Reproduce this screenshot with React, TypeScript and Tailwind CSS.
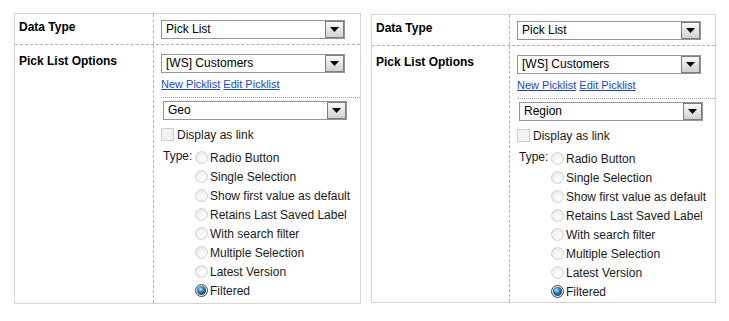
import React from "react"

const types = [
  "Radio Button",
  "Single Selection",
  "Show first value as default",
  "Retains Last Saved Label",
  "With search filter",
  "Multiple Selection",
  "Latest Version",
  "Filtered",
]

function Select({ value, className = "" }: { value: string; className?: string }) {
  return (
    <div className={`flex h-[19px] w-[184px] border border-[#959595] bg-white ${className}`}>
      <div className="flex-1 pl-[4px] text-[12px] leading-[17px] text-black">{value}</div>
      <div className="flex w-[19px] items-center justify-center border border-[#7d7d7d] bg-gradient-to-b from-[#fbfbfb] to-[#d0d0d0]">
        <svg width="9" height="5" viewBox="0 0 9 5">
          <path d="M0 0h9L4.5 5z" fill="#000" />
        </svg>
      </div>
    </div>
  )
}

function Radio({ checked }: { checked?: boolean }) {
  if (checked) {
    return (
      <span className="mt-[2px] flex h-[13px] w-[13px] shrink-0 items-center justify-center rounded-full border border-[#4a4a4a] bg-[#e4e4e4]">
        <span className="h-[9px] w-[9px] rounded-full bg-[radial-gradient(circle_at_40%_35%,#b6e6ff_0%,#1f78b4_40%,#08314f_100%)]" />
      </span>
    )
  }
  return (
    <span className="mt-[2px] h-[13px] w-[13px] shrink-0 rounded-full border border-[#d2d2d2] bg-[radial-gradient(circle_at_60%_65%,#ffffff_0%,#f2f2f2_50%,#dedede_100%)]" />
  )
}

function Panel({
  geo,
  labelW,
  className,
}: {
  geo: string
  labelW: string
  className: string
}) {
  return (
    <div className={`flex flex-col border border-[#d4d4d4] bg-white ${className}`}>
      <div className="flex h-[31px] border-b border-dashed border-[#b4b4b4]">
        <div className={`${labelW} border-r border-dashed border-[#b4b4b4] pl-[4px] pt-[6px] text-[12px] font-bold leading-[15px] text-black`}>
          Data Type
        </div>
        <div className="flex-1 pl-[7px] pt-[6px]">
          <Select value="Pick List" />
        </div>
      </div>
      <div className="flex flex-1">
        <div className={`${labelW} border-r border-dashed border-[#b4b4b4] pl-[4px] pt-[9px] text-[12px] font-bold leading-[15px] text-black`}>
          Pick List Options
        </div>
        <div className="flex-1 pl-[7px] pt-[9px]">
          <Select value="[WS] Customers" />
          <div className="mt-[5px] text-[11px] leading-[13px] text-[#1e46c8]">
            <span className="underline">New Picklist</span> <span className="underline">Edit Picklist</span>
          </div>
          <div className="mt-[6px] border-t border-dotted border-[#a8a8a8] pt-[3px]">
            <Select value={geo} className="ml-[2px]" />
            <div className="mt-[8px] flex items-start gap-[3px]">
              <span className="h-[13px] w-[13px] border border-[#cdcdcd] bg-[#f3f3f3]" />
              <span className="text-[12px] leading-[15px] text-[#1a1a1a]">Display as link</span>
            </div>
            <div className="mt-[6px] flex items-start">
              <span className="w-[34px] pl-[2px] text-[12px] leading-[15px] text-[#1a1a1a]">Type:</span>
              <div className="flex flex-col">
                {types.map((t) => (
                  <div key={t} className="flex h-[19px] items-start">
                    <Radio checked={t === "Filtered"} />
                    <span className="ml-[2px] text-[12px] leading-[19px] text-[#1a1a1a]">{t}</span>
                  </div>
                ))}
              </div>
            </div>
          </div>
        </div>
      </div>
    </div>
  )
}

export default function App() {
  return (
    <div className="flex h-[321px] w-[729px] items-start bg-white font-['Liberation_Sans',Arial,sans-serif]">
      <Panel geo="Geo" labelW="w-[139px]" className="ml-[14px] mt-[13px] h-[291px] w-[347px]" />
      <Panel geo="Region" labelW="w-[138px]" className="ml-[10px] mt-[14px] h-[289px] w-[345px]" />
    </div>
  )
}
